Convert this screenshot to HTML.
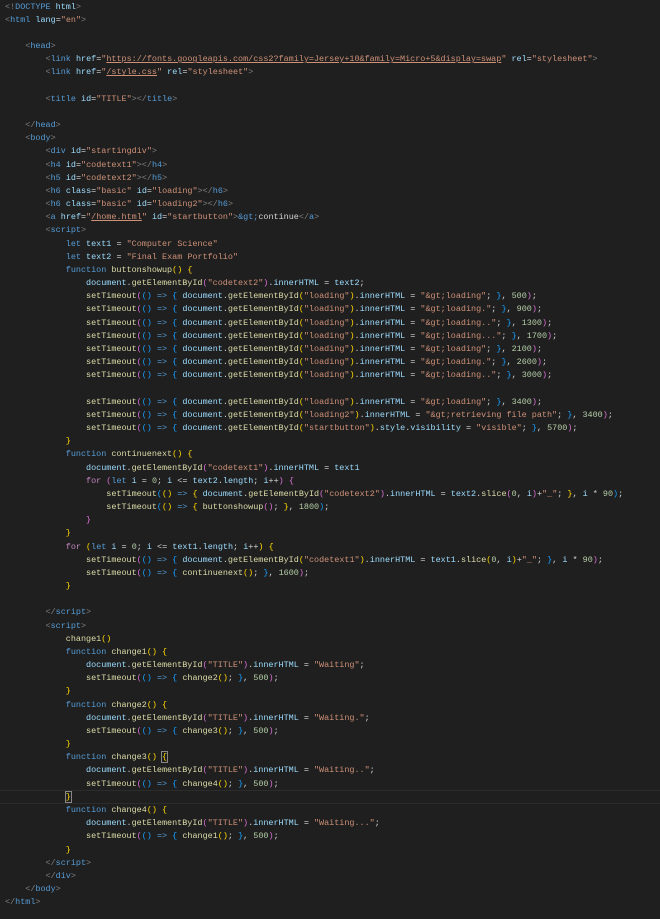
<!DOCTYPE html>
<html><head><style>
body{margin:0;background:#1f1f1f;width:660px;height:919px;overflow:hidden;position:relative}
pre{margin:0;position:absolute;left:5px;top:0.5px;font:8.45px/13.17px "Liberation Mono",monospace;color:#d4d4d4;white-space:pre}
i{font-style:normal}
.t{color:#569cd6}.a{color:#9cdcfe}.s{color:#ce9178}.p{color:#808080}.k{color:#569cd6}.c{color:#c586c0}.f{color:#dcdcaa}.v{color:#9cdcfe}.n{color:#b5cea8}.y{color:#ffd700}.m{color:#da70d6}.b{color:#179fff}
.u{text-decoration:underline;text-decoration-color:#ce9178}
.cur{position:absolute;left:0;right:0;top:790px;height:12px;border-top:1px solid #2c2c2c;border-bottom:1px solid #2c2c2c}
</style></head><body>
<div class="cur"></div>
<pre><i class=p>&lt;!</i><i class=t>DOCTYPE</i> <i class=a>html</i><i class=p>&gt;</i>
<i class=p>&lt;</i><i class=t>html</i> <i class=a>lang</i>=<i class=s>"en"</i><i class=p>&gt;</i>

    <i class=p>&lt;</i><i class=t>head</i><i class=p>&gt;</i>
        <i class=p>&lt;</i><i class=t>link</i> <i class=a>href</i>=<i class=s>"<i class=u>https://fonts.googleapis.com/css2?family=Jersey+10&amp;family=Micro+5&amp;display=swap</i>"</i> <i class=a>rel</i>=<i class=s>"stylesheet"</i><i class=p>&gt;</i>
        <i class=p>&lt;</i><i class=t>link</i> <i class=a>href</i>=<i class=s>"<i class=u>/style.css</i>"</i> <i class=a>rel</i>=<i class=s>"stylesheet"</i><i class=p>&gt;</i>

        <i class=p>&lt;</i><i class=t>title</i> <i class=a>id</i>=<i class=s>"TITLE"</i><i class=p>&gt;&lt;/</i><i class=t>title</i><i class=p>&gt;</i>

    <i class=p>&lt;/</i><i class=t>head</i><i class=p>&gt;</i>
    <i class=p>&lt;</i><i class=t>body</i><i class=p>&gt;</i>
        <i class=p>&lt;</i><i class=t>div</i> <i class=a>id</i>=<i class=s>"startingdiv"</i><i class=p>&gt;</i>
        <i class=p>&lt;</i><i class=t>h4</i> <i class=a>id</i>=<i class=s>"codetext1"</i><i class=p>&gt;&lt;/</i><i class=t>h4</i><i class=p>&gt;</i>
        <i class=p>&lt;</i><i class=t>h5</i> <i class=a>id</i>=<i class=s>"codetext2"</i><i class=p>&gt;&lt;/</i><i class=t>h5</i><i class=p>&gt;</i>
        <i class=p>&lt;</i><i class=t>h6</i> <i class=a>class</i>=<i class=s>"basic"</i> <i class=a>id</i>=<i class=s>"loading"</i><i class=p>&gt;&lt;/</i><i class=t>h6</i><i class=p>&gt;</i>
        <i class=p>&lt;</i><i class=t>h6</i> <i class=a>class</i>=<i class=s>"basic"</i> <i class=a>id</i>=<i class=s>"loading2"</i><i class=p>&gt;&lt;/</i><i class=t>h6</i><i class=p>&gt;</i>
        <i class=p>&lt;</i><i class=t>a</i> <i class=a>href</i>=<i class=s>"<i class=u>/home.html</i>"</i> <i class=a>id</i>=<i class=s>"startbutton"</i><i class=p>&gt;</i><i class=t>&amp;gt;</i>continue<i class=p>&lt;/</i><i class=t>a</i><i class=p>&gt;</i>
        <i class=p>&lt;</i><i class=t>script</i><i class=p>&gt;</i>
            <i class=k>let</i> <i class=v>text1</i> = <i class=s>"Computer Science"</i>
            <i class=k>let</i> <i class=v>text2</i> = <i class=s>"Final Exam Portfolio"</i>
            <i class=k>function</i> <i class=f>buttonshowup</i><i class=y>()</i> <i class=y>{</i>
                <i class=v>document</i>.<i class=f>getElementById</i><i class=m>(</i><i class=s>"codetext2"</i><i class=m>)</i>.<i class=v>innerHTML</i> = <i class=v>text2</i>;
                <i class=f>setTimeout</i><i class=m>(</i><i class=b>()</i> <i class=k>=&gt;</i> <i class=b>{</i> <i class=v>document</i>.<i class=f>getElementById</i><i class=y>(</i><i class=s>"loading"</i><i class=y>)</i>.<i class=v>innerHTML</i> = <i class=s>"&amp;gt;loading"</i>; <i class=b>}</i>, <i class=n>500</i><i class=m>)</i>;
                <i class=f>setTimeout</i><i class=m>(</i><i class=b>()</i> <i class=k>=&gt;</i> <i class=b>{</i> <i class=v>document</i>.<i class=f>getElementById</i><i class=y>(</i><i class=s>"loading"</i><i class=y>)</i>.<i class=v>innerHTML</i> = <i class=s>"&amp;gt;loading."</i>; <i class=b>}</i>, <i class=n>900</i><i class=m>)</i>;
                <i class=f>setTimeout</i><i class=m>(</i><i class=b>()</i> <i class=k>=&gt;</i> <i class=b>{</i> <i class=v>document</i>.<i class=f>getElementById</i><i class=y>(</i><i class=s>"loading"</i><i class=y>)</i>.<i class=v>innerHTML</i> = <i class=s>"&amp;gt;loading.."</i>; <i class=b>}</i>, <i class=n>1300</i><i class=m>)</i>;
                <i class=f>setTimeout</i><i class=m>(</i><i class=b>()</i> <i class=k>=&gt;</i> <i class=b>{</i> <i class=v>document</i>.<i class=f>getElementById</i><i class=y>(</i><i class=s>"loading"</i><i class=y>)</i>.<i class=v>innerHTML</i> = <i class=s>"&amp;gt;loading..."</i>; <i class=b>}</i>, <i class=n>1700</i><i class=m>)</i>;
                <i class=f>setTimeout</i><i class=m>(</i><i class=b>()</i> <i class=k>=&gt;</i> <i class=b>{</i> <i class=v>document</i>.<i class=f>getElementById</i><i class=y>(</i><i class=s>"loading"</i><i class=y>)</i>.<i class=v>innerHTML</i> = <i class=s>"&amp;gt;loading"</i>; <i class=b>}</i>, <i class=n>2100</i><i class=m>)</i>;
                <i class=f>setTimeout</i><i class=m>(</i><i class=b>()</i> <i class=k>=&gt;</i> <i class=b>{</i> <i class=v>document</i>.<i class=f>getElementById</i><i class=y>(</i><i class=s>"loading"</i><i class=y>)</i>.<i class=v>innerHTML</i> = <i class=s>"&amp;gt;loading."</i>; <i class=b>}</i>, <i class=n>2600</i><i class=m>)</i>;
                <i class=f>setTimeout</i><i class=m>(</i><i class=b>()</i> <i class=k>=&gt;</i> <i class=b>{</i> <i class=v>document</i>.<i class=f>getElementById</i><i class=y>(</i><i class=s>"loading"</i><i class=y>)</i>.<i class=v>innerHTML</i> = <i class=s>"&amp;gt;loading.."</i>; <i class=b>}</i>, <i class=n>3000</i><i class=m>)</i>;

                <i class=f>setTimeout</i><i class=m>(</i><i class=b>()</i> <i class=k>=&gt;</i> <i class=b>{</i> <i class=v>document</i>.<i class=f>getElementById</i><i class=y>(</i><i class=s>"loading"</i><i class=y>)</i>.<i class=v>innerHTML</i> = <i class=s>"&amp;gt;loading"</i>; <i class=b>}</i>, <i class=n>3400</i><i class=m>)</i>;
                <i class=f>setTimeout</i><i class=m>(</i><i class=b>()</i> <i class=k>=&gt;</i> <i class=b>{</i> <i class=v>document</i>.<i class=f>getElementById</i><i class=y>(</i><i class=s>"loading2"</i><i class=y>)</i>.<i class=v>innerHTML</i> = <i class=s>"&amp;gt;retrieving file path"</i>; <i class=b>}</i>, <i class=n>3400</i><i class=m>)</i>;
                <i class=f>setTimeout</i><i class=m>(</i><i class=b>()</i> <i class=k>=&gt;</i> <i class=b>{</i> <i class=v>document</i>.<i class=f>getElementById</i><i class=y>(</i><i class=s>"startbutton"</i><i class=y>)</i>.<i class=v>style</i>.<i class=v>visibility</i> = <i class=s>"visible"</i>; <i class=b>}</i>, <i class=n>5700</i><i class=m>)</i>;
            <i class=y>}</i>
            <i class=k>function</i> <i class=f>continuenext</i><i class=y>()</i> <i class=y>{</i>
                <i class=v>document</i>.<i class=f>getElementById</i><i class=m>(</i><i class=s>"codetext1"</i><i class=m>)</i>.<i class=v>innerHTML</i> = <i class=v>text1</i>
                <i class=c>for</i> <i class=m>(</i><i class=k>let</i> <i class=v>i</i> = <i class=n>0</i>; <i class=v>i</i> &lt;= <i class=v>text2</i>.<i class=v>length</i>; <i class=v>i</i>++<i class=m>)</i> <i class=m>{</i>
                    <i class=f>setTimeout</i><i class=b>(</i><i class=y>()</i> <i class=k>=&gt;</i> <i class=y>{</i> <i class=v>document</i>.<i class=f>getElementById</i><i class=m>(</i><i class=s>"codetext2"</i><i class=m>)</i>.<i class=v>innerHTML</i> = <i class=v>text2</i>.<i class=f>slice</i><i class=m>(</i><i class=n>0</i>, <i class=v>i</i><i class=m>)</i>+<i class=s>"_"</i>; <i class=y>}</i>, <i class=v>i</i> * <i class=n>90</i><i class=b>)</i>;
                    <i class=f>setTimeout</i><i class=b>(</i><i class=y>()</i> <i class=k>=&gt;</i> <i class=y>{</i> <i class=f>buttonshowup</i><i class=m>()</i>; <i class=y>}</i>, <i class=n>1800</i><i class=b>)</i>;
                <i class=m>}</i>
            <i class=y>}</i>
            <i class=c>for</i> <i class=y>(</i><i class=k>let</i> <i class=v>i</i> = <i class=n>0</i>; <i class=v>i</i> &lt;= <i class=v>text1</i>.<i class=v>length</i>; <i class=v>i</i>++<i class=y>)</i> <i class=y>{</i>
                <i class=f>setTimeout</i><i class=m>(</i><i class=b>()</i> <i class=k>=&gt;</i> <i class=b>{</i> <i class=v>document</i>.<i class=f>getElementById</i><i class=y>(</i><i class=s>"codetext1"</i><i class=y>)</i>.<i class=v>innerHTML</i> = <i class=v>text1</i>.<i class=f>slice</i><i class=y>(</i><i class=n>0</i>, <i class=v>i</i><i class=y>)</i>+<i class=s>"_"</i>; <i class=b>}</i>, <i class=v>i</i> * <i class=n>90</i><i class=m>)</i>;
                <i class=f>setTimeout</i><i class=m>(</i><i class=b>()</i> <i class=k>=&gt;</i> <i class=b>{</i> <i class=f>continuenext</i><i class=y>()</i>; <i class=b>}</i>, <i class=n>1600</i><i class=m>)</i>;
            <i class=y>}</i>

        <i class=p>&lt;/</i><i class=t>script</i><i class=p>&gt;</i>
        <i class=p>&lt;</i><i class=t>script</i><i class=p>&gt;</i>
            <i class=f>change1</i><i class=y>()</i>
            <i class=k>function</i> <i class=f>change1</i><i class=y>()</i> <i class=y>{</i>
                <i class=v>document</i>.<i class=f>getElementById</i><i class=m>(</i><i class=s>"TITLE"</i><i class=m>)</i>.<i class=v>innerHTML</i> = <i class=s>"Waiting"</i>;
                <i class=f>setTimeout</i><i class=m>(</i><i class=b>()</i> <i class=k>=&gt;</i> <i class=b>{</i> <i class=f>change2</i><i class=y>()</i>; <i class=b>}</i>, <i class=n>500</i><i class=m>)</i>;
            <i class=y>}</i>
            <i class=k>function</i> <i class=f>change2</i><i class=y>()</i> <i class=y>{</i>
                <i class=v>document</i>.<i class=f>getElementById</i><i class=m>(</i><i class=s>"TITLE"</i><i class=m>)</i>.<i class=v>innerHTML</i> = <i class=s>"Waiting."</i>;
                <i class=f>setTimeout</i><i class=m>(</i><i class=b>()</i> <i class=k>=&gt;</i> <i class=b>{</i> <i class=f>change3</i><i class=y>()</i>; <i class=b>}</i>, <i class=n>500</i><i class=m>)</i>;
            <i class=y>}</i>
            <i class=k>function</i> <i class=f>change3</i><i class=y>()</i> <i class=y style="outline:1px solid #888">{</i>
                <i class=v>document</i>.<i class=f>getElementById</i><i class=m>(</i><i class=s>"TITLE"</i><i class=m>)</i>.<i class=v>innerHTML</i> = <i class=s>"Waiting.."</i>;
                <i class=f>setTimeout</i><i class=m>(</i><i class=b>()</i> <i class=k>=&gt;</i> <i class=b>{</i> <i class=f>change4</i><i class=y>()</i>; <i class=b>}</i>, <i class=n>500</i><i class=m>)</i>;
            <i class=y style="outline:1px solid #888">}</i>
            <i class=k>function</i> <i class=f>change4</i><i class=y>()</i> <i class=y>{</i>
                <i class=v>document</i>.<i class=f>getElementById</i><i class=m>(</i><i class=s>"TITLE"</i><i class=m>)</i>.<i class=v>innerHTML</i> = <i class=s>"Waiting..."</i>;
                <i class=f>setTimeout</i><i class=m>(</i><i class=b>()</i> <i class=k>=&gt;</i> <i class=b>{</i> <i class=f>change1</i><i class=y>()</i>; <i class=b>}</i>, <i class=n>500</i><i class=m>)</i>;
            <i class=y>}</i>
        <i class=p>&lt;/</i><i class=t>script</i><i class=p>&gt;</i>
        <i class=p>&lt;/</i><i class=t>div</i><i class=p>&gt;</i>
    <i class=p>&lt;/</i><i class=t>body</i><i class=p>&gt;</i>
<i class=p>&lt;/</i><i class=t>html</i><i class=p>&gt;</i></pre>
</body></html>
